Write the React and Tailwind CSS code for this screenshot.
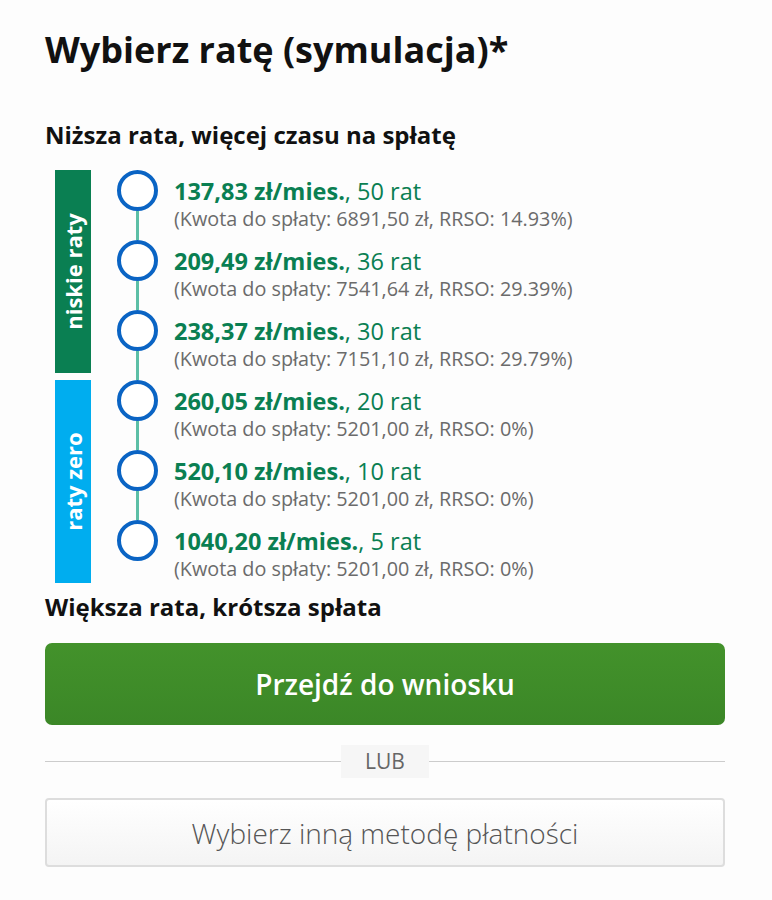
import React from 'react';

const rows = [
  { rate: '137,83 zł/mies.', count: '50 rat', total: '6891,50 zł', rrso: '14.93%' },
  { rate: '209,49 zł/mies.', count: '36 rat', total: '7541,64 zł', rrso: '29.39%' },
  { rate: '238,37 zł/mies.', count: '30 rat', total: '7151,10 zł', rrso: '29.79%' },
  { rate: '260,05 zł/mies.', count: '20 rat', total: '5201,00 zł', rrso: '0%' },
  { rate: '520,10 zł/mies.', count: '10 rat', total: '5201,00 zł', rrso: '0%' },
  { rate: '1040,20 zł/mies.', count: '5 rat', total: '5201,00 zł', rrso: '0%' },
];

const App = () => {
  return (
    <div className="min-h-screen bg-[#fdfdfd] pl-[45px] pr-[47px] pt-[26px] pb-8 font-['Open_Sans',sans-serif] text-[#111]">
      <h1 className="text-[36px] font-bold leading-[48px]">Wybierz ratę (symulacja)*</h1>

      <h2 className="mt-[45px] text-[24px] font-bold leading-[32px]">Niższa rata, więcej czasu na spłatę</h2>

      <div className="mt-[19px] flex">
        {/* Group labels */}
        <div className="ml-[10px] flex w-[36px] flex-col gap-[7px]">
          <div className="flex h-[203px] items-center justify-center bg-[#0a7f52]">
            <span className="-rotate-90 whitespace-nowrap text-[22px] font-bold text-white">niskie raty</span>
          </div>
          <div className="flex h-[203px] items-center justify-center bg-[#00adef]">
            <span className="-rotate-90 whitespace-nowrap text-[22px] font-bold text-white">raty zero</span>
          </div>
        </div>

        {/* Options */}
        <div className="ml-[26px] flex flex-col">
          {rows.map((r, i) => (
            <div key={r.rate} className="flex h-[70px] gap-[16px]">
              <div className="flex w-[41px] flex-col items-center">
                <div className="h-[41px] w-[41px] shrink-0 rounded-full border-[4px] border-[#0a64c4] bg-white" />
                {i < rows.length - 1 && <div className="w-[3px] flex-1 bg-[#5cbfa6]" />}
              </div>
              <div className="pt-[6px]">
                <div className="text-[23.5px] leading-[30px] text-[#0a7f52]">
                  <span className="font-bold">{r.rate}</span>, {r.count}
                </div>
                <div className="text-[19.8px] leading-[26px] text-[#6b6b6b]">
                  (Kwota do spłaty: {r.total}, RRSO: {r.rrso})
                </div>
              </div>
            </div>
          ))}
        </div>
      </div>

      <h2 className="mt-[1px] text-[24px] font-bold leading-[32px]">Większa rata, krótsza spłata</h2>

      <button className="mt-[20px] flex h-[82px] w-full items-center justify-center rounded-[7px] bg-gradient-to-b from-[#43922b] to-[#3b8727] text-[28px] font-semibold text-white">
        Przejdź do wniosku
      </button>

      <div className="mt-[20px] flex items-center">
        <div className="h-px flex-1 bg-[#cccccc]" />
        <span className="bg-[#f6f6f6] px-[24px] py-[2px] text-[21px] leading-[29px] text-[#666]">LUB</span>
        <div className="h-px flex-1 bg-[#cccccc]" />
      </div>

      <button className="mt-[20px] flex h-[69px] w-full items-center justify-center rounded-[4px] border-2 border-[#dddddd] bg-gradient-to-b from-white to-[#f4f4f4] text-[28px] font-light text-[#555]">
        Wybierz inną metodę płatności
      </button>
    </div>
  );
};

export default App;
